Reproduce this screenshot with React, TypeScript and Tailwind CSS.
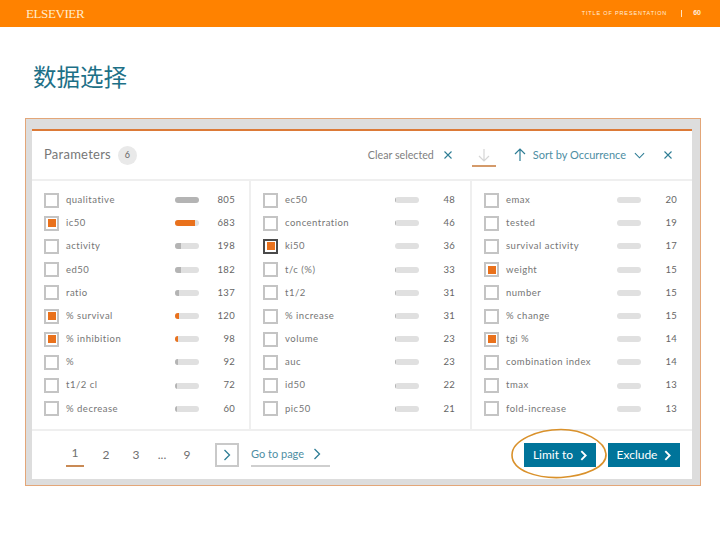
import React from "react";

type Row = { label: string; n: number; on?: boolean; dark?: boolean; pct: number };

const col1: Row[] = [
  { label: "qualitative", n: 805, pct: 100 },
  { label: "ic50", n: 683, on: true, pct: 85 },
  { label: "activity", n: 198, pct: 25 },
  { label: "ed50", n: 182, pct: 25 },
  { label: "ratio", n: 137, pct: 17 },
  { label: "% survival", n: 120, on: true, pct: 17 },
  { label: "% inhibition", n: 98, on: true, pct: 12 },
  { label: "%", n: 92, pct: 11 },
  { label: "t1/2 cl", n: 72, pct: 9 },
  { label: "% decrease", n: 60, pct: 7 },
];
const col2: Row[] = [
  { label: "ec50", n: 48, pct: 5 },
  { label: "concentration", n: 46, pct: 5 },
  { label: "ki50", n: 36, dark: true, on: true, pct: 0 },
  { label: "t/c (%)", n: 33, pct: 4 },
  { label: "t1/2", n: 31, pct: 4 },
  { label: "% increase", n: 31, pct: 4 },
  { label: "volume", n: 23, pct: 3 },
  { label: "auc", n: 23, pct: 3 },
  { label: "id50", n: 22, pct: 3 },
  { label: "pic50", n: 21, pct: 3 },
];
const col3: Row[] = [
  { label: "emax", n: 20, pct: 0 },
  { label: "tested", n: 19, pct: 0 },
  { label: "survival activity", n: 17, pct: 0 },
  { label: "weight", n: 15, on: true, pct: 0 },
  { label: "number", n: 15, pct: 0 },
  { label: "% change", n: 15, pct: 0 },
  { label: "tgi %", n: 14, on: true, pct: 0 },
  { label: "combination index", n: 14, pct: 0 },
  { label: "tmax", n: 13, pct: 0 },
  { label: "fold-increase", n: 13, pct: 0 },
];

function ParamRow({ r, labelClass }: { r: Row; labelClass: string }) {
  return (
    <div className="flex h-[23.2px] items-center">
      <div
        className={`flex h-[15px] w-[15px] items-center justify-center border-2 bg-white ${
          r.dark ? "border-[#4a4a4a]" : "border-[#c4c4c4]"
        }`}
      >
        {r.on && <div className="h-[8px] w-[8px] bg-[#e9711c]" />}
      </div>
      <div className={`ml-[7px] whitespace-nowrap text-[9.5px] tracking-[0.5px] text-[#757575] ${labelClass}`}>
        {r.label}
      </div>
      <div className="h-[6px] w-[24px] overflow-hidden rounded-full bg-[#e0e0e0]">
        <div
          className={`h-full ${r.on ? "bg-[#e9711c]" : "bg-[#b4b4b4]"}`}
          style={{ width: `${r.pct}%` }}
        />
      </div>
      <div className="w-[36px] text-right text-[9.5px] tracking-[0.3px] text-[#666]">{r.n}</div>
    </div>
  );
}

function Chevron({ className }: { className: string }) {
  return (
    <svg viewBox="0 0 8 12" className={className} fill="none" stroke="currentColor" strokeWidth="1.3">
      <path d="M1.5 1 L6.5 6 L1.5 11" />
    </svg>
  );
}

function BoldChevron() {
  return (
    <svg viewBox="0 0 8 12" className="h-[11px] w-[7px]" fill="none" stroke="currentColor" strokeWidth="2.2">
      <path d="M1.5 1 L6.5 6 L1.5 11" />
    </svg>
  );
}

function Cross({ className }: { className: string }) {
  return (
    <svg viewBox="0 0 10 10" className={className} fill="none" stroke="currentColor" strokeWidth="1.1">
      <path d="M1.5 1.5 L8.5 8.5 M8.5 1.5 L1.5 8.5" />
    </svg>
  );
}

export default function App() {
  return (
    <div
      className="h-[540px] w-[720px] overflow-hidden bg-white"
      style={{ fontFamily: "Lato, 'Noto Sans CJK SC', sans-serif" }}
    >
      <header className="flex h-[27px] items-center bg-[#ff8200] pl-[26px] pr-[19px] text-white">
        <span className="text-[13px] tracking-[-0.4px] text-[#ffeccc] [font-family:'Liberation_Serif',serif]">
          ELSEVIER
        </span>
        <span className="ml-auto text-[5.5px] tracking-[0.85px] text-[#ffeedd] [font-family:'Liberation_Sans',sans-serif]">
          TITLE OF PRESENTATION
        </span>
        <span className="ml-[14px] h-[7px] w-px bg-[#ffe2c0]" />
        <span className="ml-[11px] text-[7px] font-bold text-[#ffeedd] [font-family:'Liberation_Sans',sans-serif]">
          60
        </span>
      </header>

      <h1 className="ml-[33px] mt-[36px] h-[55px] text-[23.5px] font-normal leading-[27px] text-[#1d7087] [font-family:'Noto_Sans_CJK_SC',sans-serif]">
        数据选择
      </h1>

      <div className="relative ml-[25px] h-[368px] w-[676px] border border-[#e3a678] bg-[#dddddd] pl-[6px] pr-[8px] pt-[10px]">
        <div className="flex h-[350px] flex-col border-t-2 border-[#dc7a37] bg-white">
          <div className="flex h-[48px] shrink-0 items-center pl-[12px] pr-[19px]">
            <span className="text-[13px] tracking-[0.25px] text-[#777]">Parameters</span>
            <span className="ml-[7px] flex h-[19px] w-[19px] items-center justify-center rounded-full bg-[#e9e9e9] text-[9px] text-[#666]">
              6
            </span>
            <span className="ml-auto text-[10.7px] text-[#808080]">Clear selected</span>
            <Cross className="ml-[9px] h-[10px] w-[10px] text-[#2e7d95]" />
            <div className="ml-[19px] flex h-[24px] w-[24px] flex-col items-center justify-end border-b-2 border-[#d49a6a] pb-[3px] text-[#d6d6d6]">
              <svg viewBox="0 0 12 14" className="h-[14px] w-[12px]" fill="none" stroke="currentColor" strokeWidth="1.2">
                <path d="M6 1 V13 M1 8 L6 13 L11 8" />
              </svg>
            </div>
            <svg viewBox="0 0 12 14" className="ml-[18px] h-[14px] w-[12px] text-[#2e7d95]" fill="none" stroke="currentColor" strokeWidth="1.2">
              <path d="M6 13 V1 M1 6 L6 1 L11 6" />
            </svg>
            <span className="ml-[7px] text-[11px] text-[#4d8ea3]">Sort by Occurrence</span>
            <svg viewBox="0 0 12 7" className="ml-[8px] h-[7px] w-[11px] text-[#2e7d95]" fill="none" stroke="currentColor" strokeWidth="1.2">
              <path d="M1 1 L6 6 L11 1" />
            </svg>
            <Cross className="ml-[18px] h-[10px] w-[10px] text-[#2e7d95]" />
          </div>

          <div className="grid h-[252px] shrink-0 grid-cols-[219px_221px_220px] border-y-2 border-[#efefef]">
            <div className="border-r-2 border-[#efefef] pl-[12px] pt-[7.5px]">
              {col1.map((r) => (
                <ParamRow key={r.label} r={r} labelClass="w-[109px]" />
              ))}
            </div>
            <div className="border-r-2 border-[#efefef] pl-[12px] pt-[7.5px]">
              {col2.map((r) => (
                <ParamRow key={r.label} r={r} labelClass="w-[110px]" />
              ))}
            </div>
            <div className="pl-[12px] pt-[7.5px]">
              {col3.map((r) => (
                <ParamRow key={r.label} r={r} labelClass="w-[111px]" />
              ))}
            </div>
          </div>

          <div className="flex flex-1 items-center pl-[36px] pr-[12px] text-[12px] text-[#707070]">
            <span className="-ml-[2px] flex w-[18px] flex-col items-center border-b-2 border-[#c98a55] pb-[3px]">1</span>
            <span className="ml-[13px] w-[18px] text-center">2</span>
            <span className="ml-[12px] w-[18px] text-center">3</span>
            <span className="ml-[11px] w-[12px] text-center">...</span>
            <span className="ml-[10px] w-[18px] text-center">9</span>
            <span className="ml-[19px] flex h-[24px] w-[24px] items-center justify-center border-2 border-[#c9c9c9] text-[#2e7d95]">
              <Chevron className="h-[12px] w-[8px]" />
            </span>
            <span className="ml-[12px] flex h-[24px] w-[79px] items-center gap-[9px] border-b-2 border-[#cfcfcf] text-[11px] text-[#4d8ea3]">
              Go to page
              <Chevron className="h-[12px] w-[8px] text-[#2e7d95]" />
            </span>
            <button className="ml-auto flex h-[24px] w-[72px] items-center justify-center gap-[7px] bg-[#00749a] text-[12px] text-white">
              Limit to
              <BoldChevron />
            </button>
            <button className="ml-[12px] flex h-[24px] w-[72px] items-center justify-center gap-[7px] bg-[#00749a] text-[12px] text-white">
              Exclude
              <BoldChevron />
            </button>
          </div>
        </div>
        <svg viewBox="0 0 98 52" className="absolute left-[484px] top-[309px] h-[52px] w-[98px]" fill="none" stroke="#d9912b" strokeWidth="1.6">
          <path d="M2 27 C2 12 28 1.5 51 1.5 C73 1.5 95 13 96 26 C97 39 75 48 51 49.5 C28 50.5 2 43 2 27 Z" />
        </svg>
      </div>
    </div>
  );
}
